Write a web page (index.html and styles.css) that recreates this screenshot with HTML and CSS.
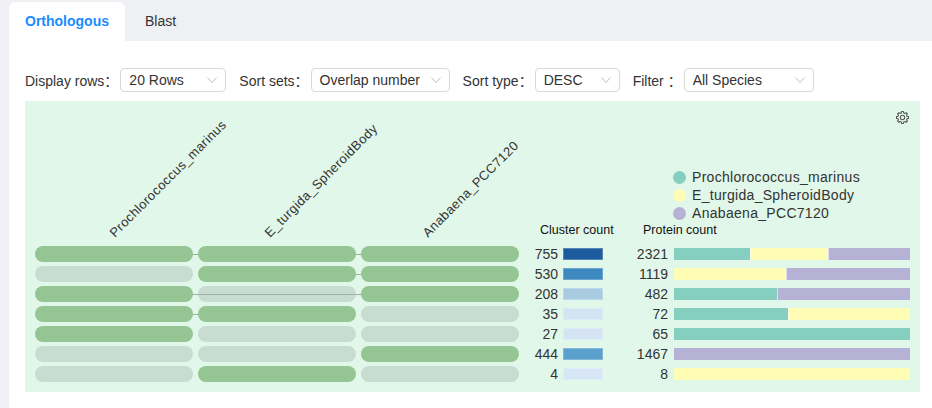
FILE: index.html
```html
<!DOCTYPE html>
<html>
<head>
<meta charset="utf-8">
<link rel="stylesheet" href="styles.css">
</head>
<body>
<div class="page">
  <div class="tabs">
    <div class="tab active">Orthologous</div>
    <div class="tab">Blast</div>
  </div>
  <div class="content">
    <div class="controls">
      <span class="lbl">Display rows：</span>
      <div class="sel sel-rows"><span>20 Rows</span><svg class="chev" viewBox="0 0 10 6"><polyline points="0.5,0.5 5,5.5 9.5,0.5"/></svg></div>
      <span class="lbl">Sort sets：</span>
      <div class="sel sel-sets"><span>Overlap number</span><svg class="chev" viewBox="0 0 10 6"><polyline points="0.5,0.5 5,5.5 9.5,0.5"/></svg></div>
      <span class="lbl">Sort type：</span>
      <div class="sel sel-type"><span>DESC</span><svg class="chev" viewBox="0 0 10 6"><polyline points="0.5,0.5 5,5.5 9.5,0.5"/></svg></div>
      <span class="lbl">Filter ：</span>
      <div class="sel sel-filter"><span>All Species</span><svg class="chev" viewBox="0 0 10 6"><polyline points="0.5,0.5 5,5.5 9.5,0.5"/></svg></div>
    </div>

    <div class="panel">
      <svg class="gear" viewBox="0 0 16 16">
        <path d="M12.85 6.79 L14.42 6.98 L14.42 9.02 L12.85 9.21 L12.29 10.58 L13.26 11.82 L11.82 13.26 L10.58 12.29 L9.21 12.85 L9.02 14.42 L6.98 14.42 L6.79 12.85 L5.42 12.29 L4.18 13.26 L2.74 11.82 L3.71 10.58 L3.15 9.21 L1.58 9.02 L1.58 6.98 L3.15 6.79 L3.71 5.42 L2.74 4.18 L4.18 2.74 L5.42 3.71 L6.79 3.15 L6.98 1.58 L9.02 1.58 L9.21 3.15 L10.58 3.71 L11.82 2.74 L13.26 4.18 L12.29 5.42 Z"/>
        <circle cx="8" cy="8" r="2.3"/>
      </svg>

      <div class="head">
        <div class="set-labels">
          <div class="set-col"><span class="rot">Prochlorococcus_marinus</span></div>
          <div class="set-col"><span class="rot">E_turgida_SpheroidBody</span></div>
          <div class="set-col"><span class="rot">Anabaena_PCC7120</span></div>
        </div>
        <div class="head-right">
          <ul class="legend">
            <li><span class="dot teal"></span>Prochlorococcus_marinus</li>
            <li><span class="dot yellow"></span>E_turgida_SpheroidBody</li>
            <li><span class="dot purple"></span>Anabaena_PCC7120</li>
          </ul>
          <div class="count-titles">
            <span class="ct-cluster">Cluster count</span>
            <span class="ct-protein">Protein count</span>
          </div>
        </div>
      </div>

      <div class="row">
        <div class="sets">
          <span class="link link-1-3"></span>
          <span class="pill on"></span><span class="pill on"></span><span class="pill on"></span>
        </div>
        <span class="cnum">755</span><span class="cbar" style="background:#1c5b9d"></span>
        <span class="pnum">2321</span>
        <div class="pbar"><span class="seg teal" style="width:77px"></span><span class="seg yellow" style="width:77px"></span><span class="seg purple" style="width:82px"></span></div>
      </div>

      <div class="row">
        <div class="sets">
          <span class="link link-2-3"></span>
          <span class="pill"></span><span class="pill on"></span><span class="pill on"></span>
        </div>
        <span class="cnum">530</span><span class="cbar" style="background:#3f89c1"></span>
        <span class="pnum">1119</span>
        <div class="pbar"><span class="seg yellow" style="width:112px"></span><span class="seg purple" style="width:124px"></span></div>
      </div>

      <div class="row">
        <div class="sets">
          <span class="link link-1-3"></span>
          <span class="pill on"></span><span class="pill"></span><span class="pill on"></span>
        </div>
        <span class="cnum">208</span><span class="cbar" style="background:#a8cbe2"></span>
        <span class="pnum">482</span>
        <div class="pbar"><span class="seg teal" style="width:103px"></span><span class="seg purple" style="width:133px"></span></div>
      </div>

      <div class="row">
        <div class="sets">
          <span class="link link-1-2"></span>
          <span class="pill on"></span><span class="pill on"></span><span class="pill"></span>
        </div>
        <span class="cnum">35</span><span class="cbar" style="background:#d2e3f2"></span>
        <span class="pnum">72</span>
        <div class="pbar"><span class="seg teal" style="width:114px"></span><span class="seg yellow" style="width:122px"></span></div>
      </div>

      <div class="row">
        <div class="sets">
          <span class="pill on"></span><span class="pill"></span><span class="pill"></span>
        </div>
        <span class="cnum">27</span><span class="cbar" style="background:#d4e4f3"></span>
        <span class="pnum">65</span>
        <div class="pbar"><span class="seg teal" style="width:236px"></span></div>
      </div>

      <div class="row">
        <div class="sets">
          <span class="pill"></span><span class="pill"></span><span class="pill on"></span>
        </div>
        <span class="cnum">444</span><span class="cbar" style="background:#5b9fcc"></span>
        <span class="pnum">1467</span>
        <div class="pbar"><span class="seg purple" style="width:236px"></span></div>
      </div>

      <div class="row">
        <div class="sets">
          <span class="pill"></span><span class="pill on"></span><span class="pill"></span>
        </div>
        <span class="cnum">4</span><span class="cbar" style="background:#d6e6f4"></span>
        <span class="pnum">8</span>
        <div class="pbar"><span class="seg yellow" style="width:236px"></span></div>
      </div>
    </div>
  </div>
</div>
</body>
</html>
```

FILE: styles.css
```css
html, body {
  margin: 0;
  padding: 0;
}

body {
  background: #eef0f4;
  font-family: "Liberation Sans", Arial, "Noto Sans CJK SC", sans-serif;
  color: #333;
}

.page {
  margin-left: 9px;
  display: flex;
  flex-direction: column;
  min-height: 100vh;
}

/* Tabs */
.tabs {
  display: flex;
  align-items: flex-end;
  height: 41px;
}

.tab {
  height: 39px;
  line-height: 39px;
  font-size: 14px;
  color: #333;
  padding: 0 20px;
}

.tab.active {
  width: 116px;
  padding: 0;
  text-align: center;
  background: #fff;
  color: #1a8cff;
  font-weight: 600;
  border-radius: 6px 6px 0 0;
}

/* Content */
.content {
  flex: 1;
  background: #fff;
  padding: 27px 12px 10px 16px;
}

.controls {
  display: flex;
  align-items: center;
  height: 24px;
  font-size: 14px;
}

.lbl {
  color: #333;
  white-space: nowrap;
  margin-right: 2px;
}

.sel {
  box-sizing: border-box;
  height: 24px;
  border: 1px solid #d9d9d9;
  border-radius: 4px;
  display: flex;
  align-items: center;
  justify-content: space-between;
  padding: 0 8px 0 8px;
  margin-right: 13px;
  color: #333;
  background: #fff;
}

.sel-rows { width: 106px; }
.sel-sets { width: 139px; }
.sel-type { width: 85px; }
.sel-filter { width: 130px; }

.chev {
  width: 10px;
  height: 6px;
  fill: none;
  stroke: #bfbfbf;
  stroke-width: 1;
}

/* Panel */
.panel {
  position: relative;
  margin-top: 9px;
  background: #e1f7e9;
  padding: 0 10px 10px 10px;
}

.gear {
  position: absolute;
  top: 9px;
  right: 10px;
  width: 15px;
  height: 15px;
  fill: none;
  stroke: #555;
  stroke-width: 1.1;
  stroke-linejoin: round;
}

.head {
  display: flex;
  height: 145px;
}

.set-labels {
  width: 484px;
  flex: none;
  display: grid;
  grid-template-columns: repeat(3, minmax(0, 1fr));
  column-gap: 4.5px;
  align-items: end;
}

.set-col {
  min-width: 0;
  padding-bottom: 5px;
  white-space: nowrap;
}

.set-col:nth-child(1) { padding-left: 82px; }
.set-col:nth-child(2) { padding-left: 74px; }
.set-col:nth-child(3) { padding-left: 69px; }

.rot {
  display: inline-block;
  font-size: 13px;
  line-height: 15px;
  letter-spacing: 0.4px;
  white-space: nowrap;
  color: #333;
  transform-origin: 0 100%;
  transform: rotate(-45deg);
}

.head-right {
  flex: 1;
  display: flex;
  flex-direction: column;
  justify-content: flex-end;
}

.legend {
  list-style: none;
  margin: 0 0 0 154px;
  padding: 0;
}

.legend li {
  display: flex;
  align-items: center;
  height: 18px;
  font-size: 14px;
  letter-spacing: 0.3px;
  color: #333;
}

.dot {
  width: 13px;
  height: 13px;
  border-radius: 50%;
  margin-right: 6px;
}

.dot.teal { background: #86cec0; }
.dot.yellow { background: #fffcb6; }
.dot.purple { background: #b6b2d6; }

.count-titles {
  display: flex;
  height: 16px;
  line-height: 16px;
  margin-bottom: 8px;
  font-size: 12.5px;
  color: #111;
}

.ct-cluster {
  margin-left: 21px;
  width: 103px;
}

/* Rows */
.row {
  display: flex;
  align-items: center;
  height: 16px;
  margin-top: 4px;
}

.head + .row {
  margin-top: 0;
}

.sets {
  position: relative;
  width: 484px;
  flex: none;
  display: grid;
  grid-template-columns: repeat(3, minmax(0, 1fr));
  column-gap: 4.5px;
  height: 16px;
}

.pill {
  height: 16px;
  border-radius: 8px;
  background: #c9dcd1;
}

.pill.on {
  position: relative;
  z-index: 2;
  background: #95c592;
}

.link {
  position: absolute;
  top: 7.5px;
  height: 1px;
  background: #9bb3a2;
  z-index: 1;
}

.link-1-3 { left: 79px; right: 79px; }
.link-2-3 { left: 242px; right: 79px; }
.link-1-2 { left: 79px; right: 242px; }

.cnum,
.pnum {
  font-size: 14px;
  line-height: 16px;
  text-align: right;
  color: #333;
}

.cnum {
  width: 39px;
  margin-right: 5px;
}

.cbar {
  box-sizing: border-box;
  width: 40px;
  height: 12px;
  border: 1px solid rgba(255, 255, 255, 0.25);
}

.pnum {
  width: 65px;
  margin-right: 6px;
}

.pbar {
  display: flex;
  width: 236px;
  height: 12px;
}

.seg {
  height: 12px;
}

.seg + .seg {
  border-left: 1px solid rgba(255, 255, 255, 0.6);
}

.seg.teal { background: #86cec0; }
.seg.yellow { background: #fffcb6; }
.seg.purple { background: #b6b2d6; }
```
